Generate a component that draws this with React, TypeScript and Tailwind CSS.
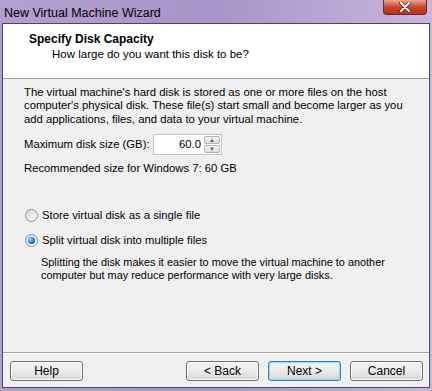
import React from "react"

function WinButton({ label, primary }: { label: string; primary?: boolean }) {
  return (
    <button
      className={
        "h-[20px] w-[73px] rounded-[3px] border text-[12px] text-black leading-none bg-gradient-to-b from-[#f2f2f2] via-[#ebebeb] to-[#d6d6d6] " +
        (primary
          ? "border-[#3c7fb1] shadow-[inset_0_0_0_1px_#94d6f7]"
          : "border-[#707070] shadow-[inset_0_0_0_1px_#fcfcfc]")
      }
    >
      {label}
    </button>
  )
}

function Radio({ checked }: { checked?: boolean }) {
  return (
    <span className="relative flex h-[13px] w-[13px] shrink-0 items-center justify-center rounded-full border border-[#8e8f8f] bg-gradient-to-br from-[#d8d8d8] to-[#fafafa]">
      {checked && (
        <span className="h-[7px] w-[7px] rounded-full bg-[radial-gradient(circle_at_35%_35%,#9ad7ff,#1a6fb8_60%,#0b3f73)]" />
      )}
    </span>
  )
}

export default function App() {
  return (
    <div
      className="flex h-[391px] w-[432px] flex-col bg-gradient-to-r from-[#b1a0cf] via-[#a894c8] to-[#c7b6de] text-black"
      style={{ fontFamily: '"Liberation Sans", Arial, sans-serif' }}
    >
      {/* title bar */}
      <div className="flex h-[23px] items-start justify-between">
        <div className="pl-[4px] pt-[4px] text-[12.5px] text-black">New Virtual Machine Wizard</div>
        <div className="mr-[5px] flex h-[15px] w-[44px] items-center justify-center rounded-b-[4px] border border-t-0 border-[#6b2a2a] bg-gradient-to-b from-[#e8a593] via-[#c9452c] to-[#b7321c]">
          <svg width="12" height="10" viewBox="0 0 12 10">
            <path d="M2 1 L10 9 M10 1 L2 9" stroke="#5a1a10" strokeWidth="3.2" strokeLinecap="round" />
            <path d="M2 1 L10 9 M10 1 L2 9" stroke="#ffffff" strokeWidth="2" strokeLinecap="round" />
          </svg>
        </div>
      </div>

      {/* client area */}
      <div className="mx-[2px] mb-[3px] flex flex-1 flex-col border border-[#4c4660] bg-[#f0f0f0]">
        {/* header */}
        <div className="h-[55px] border-b border-[#a0a0a0] bg-white pl-[26px] pt-[8px]">
          <div className="text-[12px] font-bold leading-[15px]">Specify Disk Capacity</div>
          <div className="pl-[23px] text-[11.5px] leading-[15px]">How large do you want this disk to be?</div>
        </div>

        {/* body */}
        <div className="flex flex-1 flex-col whitespace-nowrap px-[21px] pt-[7px] text-[11.3px] leading-[13.4px]">
          <p>
            The virtual machine's hard disk is stored as one or more files on the host
            <br />
            computer's physical disk. These file(s) start small and become larger as you
            <br />
            add applications, files, and data to your virtual machine.
          </p>

          <div className="mt-[8px] flex items-center">
            <span className="w-[129px]">Maximum disk size (GB):</span>
            <div className="flex h-[21px] w-[69px] border border-[#c5c5c5] bg-white">
              <span className="flex-1 pr-[3px] pt-[3px] text-right">60.0</span>
              <div className="flex w-[17px] flex-col gap-[1px] py-[1px] pr-[1px]">
                <span className="flex flex-1 items-center justify-center rounded-[2px] border border-[#b5b5b5] bg-gradient-to-b from-[#f4f4f4] to-[#dcdcdc] text-[6px] leading-none text-[#4a5f8a]">
                  ▲
                </span>
                <span className="flex flex-1 items-center justify-center rounded-[2px] border border-[#b5b5b5] bg-gradient-to-b from-[#f4f4f4] to-[#dcdcdc] text-[6px] leading-none text-[#4a5f8a]">
                  ▼
                </span>
              </div>
            </div>
          </div>

          <p className="mt-[7px]">Recommended size for Windows 7: 60 GB</p>

          <div className="mt-[33px] flex items-center gap-[4px] pl-[1px]">
            <Radio />
            <span>Store virtual disk as a single file</span>
          </div>
          <div className="mt-[12px] flex items-center gap-[4px] pl-[1px]">
            <Radio checked />
            <span>Split virtual disk into multiple files</span>
          </div>
          <p className="mt-[9px] pl-[17px] text-[10.9px] leading-[12.5px]">
            Splitting the disk makes it easier to move the virtual machine to another
            <br />
            computer but may reduce performance with very large disks.
          </p>
        </div>

        {/* footer */}
        <div className="flex h-[35px] items-start border-t border-[#a0a0a0] pl-[7px] pr-[6px] pt-[8px] shadow-[inset_0_1px_0_#ffffff]">
          <WinButton label="Help" />
          <div className="flex-1" />
          <div className="flex gap-[9px]">
            <WinButton label="< Back" />
            <WinButton label="Next >" primary />
            <WinButton label="Cancel" />
          </div>
        </div>
      </div>
    </div>
  )
}
